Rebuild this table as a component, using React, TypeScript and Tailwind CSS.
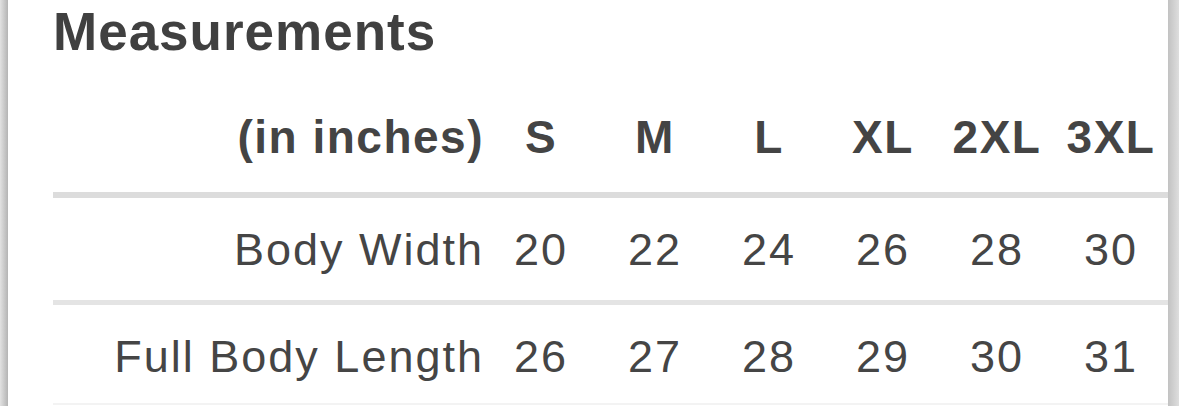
const sizes = ["S", "M", "L", "XL", "2XL", "3XL"];

const rows = [
  { label: "Body Width", values: [20, 22, 24, 26, 28, 30] },
  { label: "Full Body Length", values: [26, 27, 28, 29, 30, 31] },
];

export default function App() {
  return (
    <div className="flex h-[406px] w-full overflow-hidden bg-white font-['Liberation_Sans',Arial,sans-serif] text-[#454545]">
      {/* left edge shadow */}
      <div className="w-[8px] shrink-0 bg-gradient-to-r from-[#e2e2e2] to-[#b4b4b4]" />

      <div className="flex flex-1 flex-col pl-[45px]">
        <h1 className="pt-[5px] text-[53px] font-bold leading-none tracking-[1px] text-[#404040]">
          Measurements
        </h1>

        {/* header row */}
        <div className="grid h-[134px] grid-cols-[431px_repeat(6,114px)] items-end pb-[32px] text-[46px] font-bold leading-none tracking-[1.5px] text-[#444]">
          <div className="text-right">(in inches)</div>
          {sizes.map((s) => (
            <div key={s} className="text-center">
              {s}
            </div>
          ))}
        </div>
        <div className="h-[6px] bg-[#dcdcdc]" />

        {rows.map((row, i) => (
          <div key={row.label}>
            <div
              className={
                i === 0
                  ? "grid h-[102px] grid-cols-[431px_repeat(6,114px)] items-center text-[45px] leading-none tracking-[2px]"
                  : "grid h-[98px] grid-cols-[431px_repeat(6,114px)] items-center pt-[4px] text-[45px] leading-none tracking-[2px]"
              }
            >
              <div className="text-right">{row.label}</div>
              {row.values.map((v, j) => (
                <div key={j} className="text-center">
                  {v}
                </div>
              ))}
            </div>
            {i === 0 ? (
              <div className="h-[5px] bg-[#e4e4e4]" />
            ) : (
              <div className="h-[2px] bg-[#f3f3f3]" />
            )}
          </div>
        ))}
      </div>

      {/* right edge shadow */}
      <div className="w-[11px] shrink-0 bg-gradient-to-r from-[#c2c2c2] to-[#dedede]" />
    </div>
  );
}
